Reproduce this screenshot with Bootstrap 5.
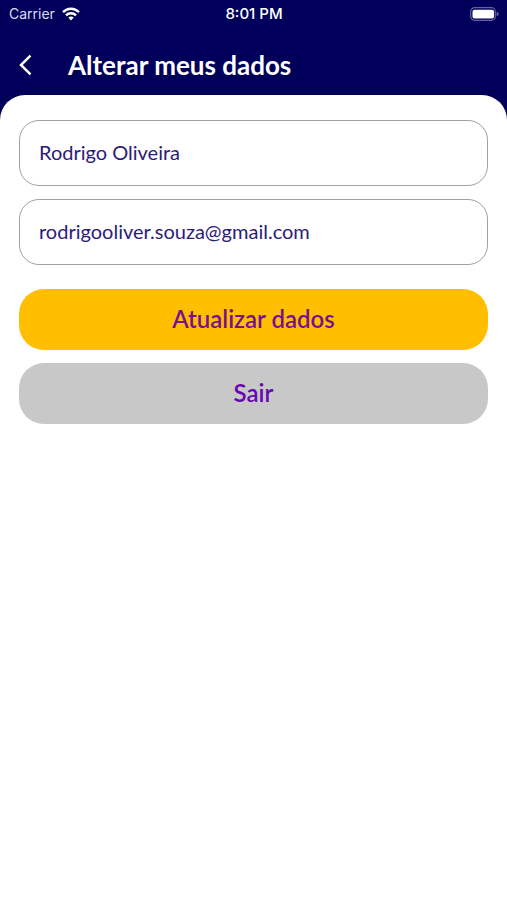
<!DOCTYPE html>
<html lang="pt-BR">
<head>
<meta charset="utf-8">
<meta name="viewport" content="width=device-width, initial-scale=1">
<title>Alterar meus dados</title>
<link href="https://cdn.jsdelivr.net/npm/bootstrap@5.3.0/dist/css/bootstrap.min.css" rel="stylesheet">
<style>
  body { background: #00005a; font-family: Lato, sans-serif; }
  .status-bar { font: 14px/20px Inter, sans-serif; height: 28px; padding: 0 8px 0 9px; color: #dcdcf0; }
  .carrier { gap: 7px; }
  .clock { color: #fff; font-size: 15px; font-weight: 500; }
  .status-bar svg { margin-bottom: 1px; }
  .title-bar { height: 67px; padding: 0 19px 9px; gap: 34px; }
  .page-title { font-size: 26px; line-height: 32px; font-weight: 700; }
  .sheet { border-radius: 25px 25px 0 0; padding: 25px 19px; }
  .field { height: 66px; border: 1px solid #a0a0a0; border-radius: 20px; padding: 0 19px 2px; font-size: 20px; color: #2b1b7a; }
  .field:focus { color: #2b1b7a; }
  .stack { gap: 13px; }
  .action { height: 61px; border: 0; border-radius: 25px; padding: 0 12px 2px; font-size: 24px; line-height: 32px; font-weight: 600; }
  .action-save, .action-save:hover { background: #ffbf00; color: #7a1090; }
  .action-exit, .action-exit:hover { background: #c8c8c8; color: #6a06b0; }
</style>
</head>
<body class="min-vh-100 d-flex flex-column">
<header class="text-white">
  <div class="status-bar row g-0 align-items-center">
    <div class="carrier col d-flex align-items-center">
      <span>Carrier</span>
      <svg width="18" height="14" viewBox="0 0 18 14" fill="none" stroke="#fff" stroke-width="2.4" aria-hidden="true">
        <path d="M1 5.200C5.500 .6 12.500 .6 17 5.200"/>
        <path d="M4 8.300C6.800 5.500 11.200 5.500 14 8.300"/>
        <path d="M6.300 10.600C7.800 9 10.200 9 11.700 10.600L9 13.500Z" fill="#fff" stroke="none"/>
      </svg>
    </div>
    <div class="col-auto clock">8:01 PM</div>
    <div class="col d-flex justify-content-end">
      <svg width="30" height="14" viewBox="0 0 30 14" aria-hidden="true">
        <rect x="1.700" y=".7" width="24.600" height="12.600" rx="4" fill="none" stroke="#6464a0" stroke-width="1.200"/>
        <rect x="3.500" y="2.700" width="21.500" height="8.800" rx="2" fill="#fff"/>
        <path d="M27.600 4.800Q29.800 5.300 29.800 7T27.600 9.200Z" fill="#6464a0"/>
      </svg>
    </div>
  </div>
  <div class="title-bar d-flex align-items-center pt-3">
    <button type="button" class="btn p-0 border-0 text-white d-flex align-items-center" aria-label="Voltar">
      <svg width="15" height="30" viewBox="0 0 15 30" fill="none" stroke="#fff" stroke-width="2.500" aria-hidden="true"><path d="M11.500 5.700L2 15L11.500 24.300"/></svg>
    </button>
    <h1 class="page-title mb-0">Alterar meus dados</h1>
  </div>
</header>
<main class="sheet bg-white flex-grow-1">
  <form>
    <div class="stack d-flex flex-column mb-4">
      <input type="text" class="field form-control" aria-label="Nome" value="Rodrigo Oliveira">
      <input type="email" class="field form-control" aria-label="E-mail" value="rodrigooliver.souza@gmail.com">
    </div>
    <div class="stack d-flex flex-column">
      <button type="button" class="btn action action-save">Atualizar dados</button>
      <button type="button" class="btn action action-exit">Sair</button>
    </div>
  </form>
</main>
<script src="https://cdn.jsdelivr.net/npm/bootstrap@5.3.0/dist/js/bootstrap.bundle.min.js"></script>
</body>
</html>
